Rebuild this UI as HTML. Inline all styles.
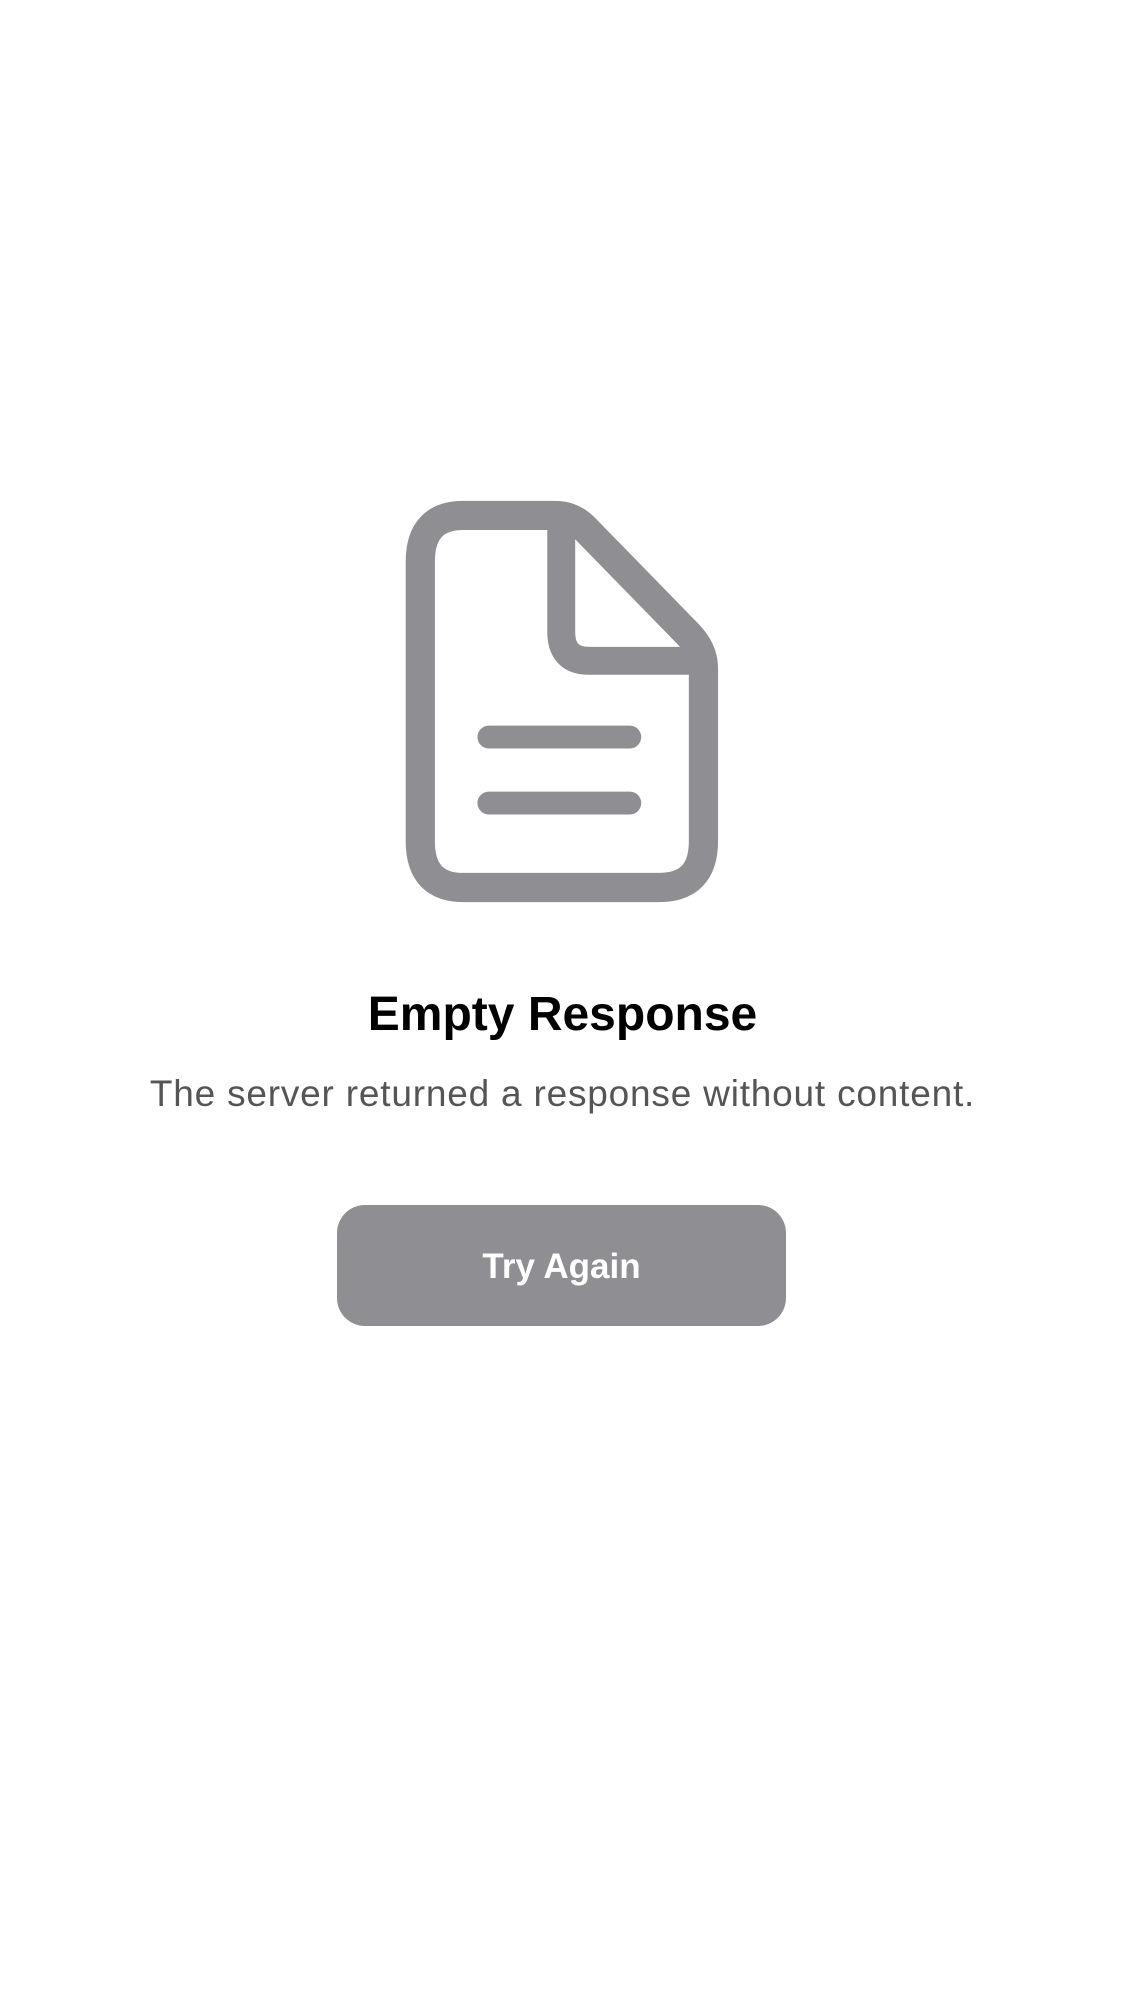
<!DOCTYPE html>
<html><head><meta charset="utf-8"><style>
html,body{margin:0;padding:0;background:#fff;width:1125px;height:2001px;overflow:hidden;font-family:"Liberation Sans",sans-serif}
svg{position:absolute;left:0;top:0}
.t{position:absolute;left:0;width:1125px;text-align:center}
.title{top:987px;font-size:48px;font-weight:bold;color:#000}
.sub{top:1073px;font-size:37px;color:#555;letter-spacing:0.8px}
.btn{position:absolute;left:337px;top:1205px;width:449px;height:121px;border-radius:28px;background:#8e8e93;color:#fff;font-size:35px;font-weight:bold;text-align:center;line-height:123px}
</style></head><body>
<svg width="1125" height="2001" viewBox="-1 -2 886 1575">
<g fill="none" stroke="#8e8e93" stroke-linejoin="round" stroke-linecap="round">
<path stroke-width="23" d="M364 403.5 H436 Q450 403.5 460 414 L540 496 Q553 509 553 524 V660 Q553 696.5 518 696.5 H364 Q330 696.5 330 660 V440 Q330 403.5 364 403.5 Z"/>
<path stroke-width="22" d="M441 410 V495 Q441 518 463 518 H548"/>
<path stroke-width="18" d="M384 578 H495 M384 630 H495"/>
</g>
</svg>
<div class="t title">Empty Response</div>
<div class="t sub">The server returned a response without content.</div>
<div class="btn">Try Again</div>
</body></html>
